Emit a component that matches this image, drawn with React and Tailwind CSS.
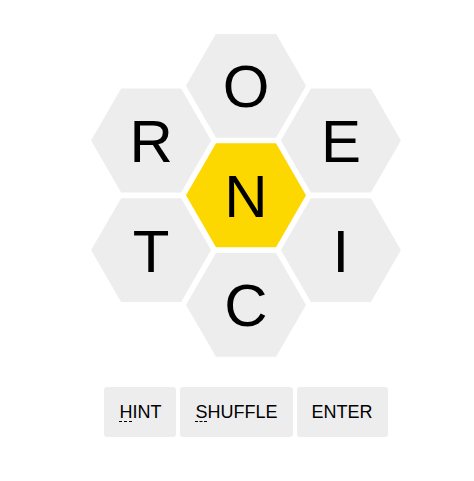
import React from "react";

const HEX_W = 60;
const HEX_H = 51.96;

const hexPoints = (cx, cy) =>
  [
    [cx - HEX_W, cy],
    [cx - HEX_W / 2, cy - HEX_H],
    [cx + HEX_W / 2, cy - HEX_H],
    [cx + HEX_W, cy],
    [cx + HEX_W / 2, cy + HEX_H],
    [cx - HEX_W / 2, cy + HEX_H],
  ]
    .map((p) => p.join(","))
    .join(" ");

// hive cells, center first
const cells = [
  { letter: "N", x: 155, y: 161.3, center: true },
  { letter: "O", x: 155, y: 51.7 },
  { letter: "E", x: 249.9, y: 106.5 },
  { letter: "I", x: 249.9, y: 216.1 },
  { letter: "C", x: 155, y: 270.9 },
  { letter: "T", x: 60.1, y: 216.1 },
  { letter: "R", x: 60.1, y: 106.5 },
];

const Hive = () => (
  <svg width="310" height="324" viewBox="0 0 310 324" className="block">
    {cells.map((cell) => (
      <g key={cell.letter}>
        <polygon
          points={hexPoints(cell.x, cell.y)}
          fill={cell.center ? "#fcd700" : "#ededed"}
        />
        <text
          x={cell.x}
          y={cell.y + 21.5}
          textAnchor="middle"
          fontSize="60"
          fill="#000"
          style={{ fontFamily: '"Liberation Sans", Arial, sans-serif' }}
        >
          {cell.letter}
        </text>
      </g>
    ))}
  </svg>
);

const HiveButton = ({ first, rest }) => (
  <button className="h-[50px] px-[15px] rounded-[3px] bg-[#ededed] text-[18px] text-black leading-none font-['Liberation_Sans',Arial,sans-serif]">
    {first && (
      <span className="underline decoration-dashed decoration-1 underline-offset-[3px]">
        {first}
      </span>
    )}
    {rest}
  </button>
);

export default function App() {
  return (
    <div className="w-[474px] h-[481px] bg-white pl-[91px] pt-[34px]">
      <div className="w-[310px] flex flex-col items-center">
        <Hive />
        <div className="flex gap-[4px] mt-[29px]">
          <HiveButton first="H" rest="INT" />
          <HiveButton first="S" rest="HUFFLE" />
          <HiveButton rest="ENTER" />
        </div>
      </div>
    </div>
  );
}
